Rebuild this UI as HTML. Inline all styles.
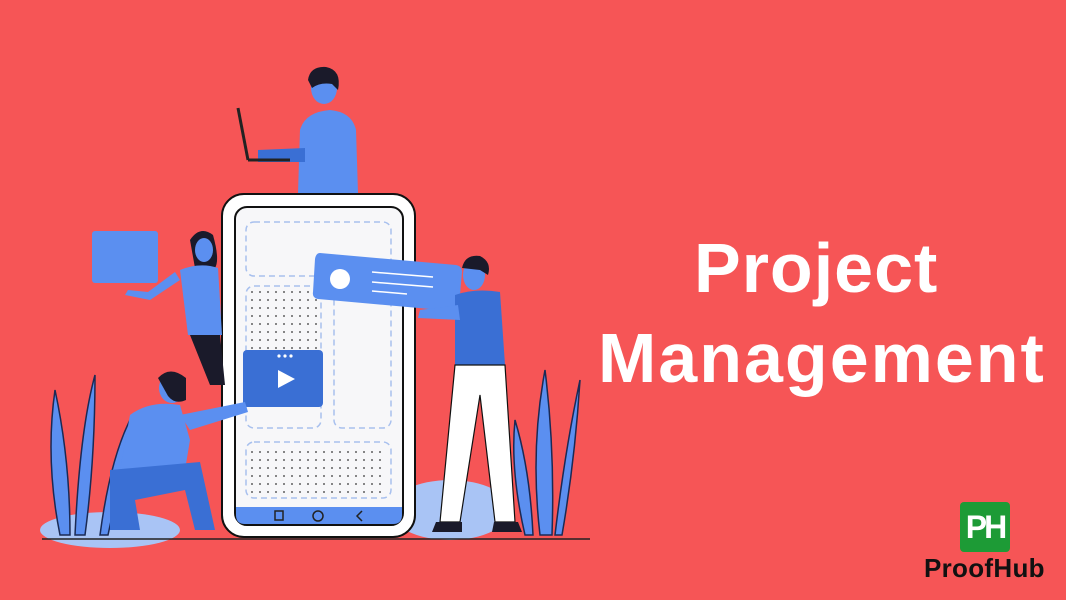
<!DOCTYPE html>
<html><head><meta charset="utf-8"><style>
html,body{margin:0;padding:0}
body{width:1066px;height:600px;background:#f65556;position:relative;overflow:hidden;font-family:"Liberation Sans",sans-serif}
.t{position:absolute;color:#fff;font-weight:bold;font-size:70px;white-space:nowrap;letter-spacing:1px}
</style></head><body>
<div class="t" style="left:694px;top:228px">Project</div>
<div class="t" style="left:598px;top:318px;letter-spacing:2px">Management</div>
<div style="position:absolute;left:960px;top:502px;width:50px;height:50px;background:#1d9b36;border-radius:4px;color:#fff;font-weight:bold;font-size:32px;line-height:50px;text-align:center;letter-spacing:-3px">PH</div>
<div style="position:absolute;left:924px;top:553px;font-weight:bold;font-size:26px;letter-spacing:0.3px;color:#111">ProofHub</div>
<svg width="1066" height="600" style="position:absolute;left:0;top:0">
<ellipse cx="110" cy="530" rx="70" ry="18" fill="#a9c4f5"/>
<ellipse cx="450" cy="510" rx="60" ry="30" fill="#a9c4f5"/>
<line x1="42" y1="539" x2="590" y2="539" stroke="#222" stroke-width="1.5"/>
<g fill="#5b8ff0" stroke="#1a2a55" stroke-width="1.5">
<path d="M60 535 Q45 460 55 390 Q70 460 70 535Z"/>
<path d="M75 535 Q80 430 95 375 Q95 460 85 535Z"/>
<path d="M100 535 Q110 460 130 420 Q120 480 108 535Z"/>
<path d="M540 535 Q530 450 545 370 Q555 450 552 535Z"/>
<path d="M555 535 Q565 450 580 380 Q575 460 562 535Z"/>
<path d="M525 535 Q510 470 515 420 Q530 470 533 535Z"/>
</g>
<rect x="222" y="194" width="193" height="343" rx="22" fill="#fff" stroke="#111" stroke-width="2"/>
<rect x="235" y="207" width="168" height="318" rx="12" fill="#f7f7f9" stroke="#111" stroke-width="2"/>
<path d="M236 507 H402 V515 Q402 524 393 524 H245 Q236 524 236 515Z" fill="#5b8ff0"/>
<rect x="275" y="511" width="8" height="9" fill="none" stroke="#222" stroke-width="1.5"/>
<circle cx="318" cy="516" r="5" fill="none" stroke="#222" stroke-width="1.5"/>
<path d="M362 511 L357 516 L362 521" fill="none" stroke="#222" stroke-width="1.5"/>
<g fill="none" stroke="#a8c0ee" stroke-width="1.5" stroke-dasharray="6 4">
<rect x="246" y="222" width="145" height="54" rx="8"/>
<rect x="246" y="286" width="75" height="142" rx="8"/>
<rect x="334" y="286" width="57" height="142" rx="8"/>
<rect x="246" y="442" width="145" height="56" rx="8"/>
</g>
<defs><pattern id="d" width="8" height="8" patternUnits="userSpaceOnUse"><circle cx="4" cy="4" r="0.9" fill="#333"/></pattern></defs>
<rect x="250" y="290" width="67" height="60" fill="url(#d)"/>
<rect x="250" y="446" width="137" height="48" fill="url(#d)"/>
<rect x="243" y="350" width="80" height="57" rx="4" fill="#3a6fd4"/>
<circle cx="279" cy="356" r="1.6" fill="#fff"/><circle cx="285" cy="356" r="1.6" fill="#fff"/><circle cx="291" cy="356" r="1.6" fill="#fff"/>
<path d="M278 370 L295 379 L278 388Z" fill="#fff"/>
<path d="M320 253 L456 265 Q462 266 462 272 L459 306 Q458 312 452 311 L318 299 Q312 298 313 292 L315 259 Q316 253 320 253Z" fill="#5b8ff0"/>
<circle cx="340" cy="279" r="10" fill="#fff"/>
<g stroke="#fff" stroke-width="1.5"><line x1="372" y1="272" x2="433" y2="277"/><line x1="372" y1="282" x2="433" y2="287"/><line x1="372" y1="291" x2="407" y2="294"/></g>
<path d="M298 193 L300 130 Q305 112 330 110 Q352 112 356 130 L358 193Z" fill="#5b8ff0"/>
<path d="M258 150 L305 148 L305 162 L258 162Z" fill="#3a6fd4"/>
<line x1="238" y1="108" x2="248" y2="160" stroke="#222" stroke-width="3"/>
<line x1="248" y1="160" x2="290" y2="160" stroke="#222" stroke-width="3"/>
<ellipse cx="324" cy="88" rx="13" ry="16" fill="#5b8ff0"/>
<path d="M308 80 Q310 66 326 67 Q342 70 338 90 L332 84 Q320 82 312 88Z" fill="#1a1a2a"/>
<path d="M190 240 Q200 225 213 235 Q220 260 215 268 L195 268Z" fill="#1a1a2a"/>
<ellipse cx="204" cy="250" rx="9" ry="12" fill="#5b8ff0"/>
<path d="M180 270 Q200 262 218 268 L222 335 L188 335Z" fill="#5b8ff0"/>
<path d="M190 335 L220 335 L225 385 L210 385Z" fill="#1a1a2a"/>
<path d="M180 280 L150 300 L125 295 L128 290 L148 292 L175 272Z" fill="#5b8ff0"/>
<rect x="92" y="231" width="66" height="52" rx="3" fill="#5b8ff0"/>
<ellipse cx="172" cy="388" rx="13" ry="15" fill="#5b8ff0"/>
<path d="M158 378 Q170 365 186 378 L186 400 Q175 405 168 396Z" fill="#1a1a2a"/>
<path d="M130 415 Q150 400 180 405 L190 440 L185 470 L120 470Z" fill="#5b8ff0"/>
<path d="M180 415 L245 402 L248 412 L190 430Z" fill="#5b8ff0"/>
<path d="M110 470 L200 462 L215 530 L195 530 L185 490 L135 500 L140 530 L110 530Z" fill="#3a6fd4"/>
<ellipse cx="474" cy="275" rx="11" ry="15" fill="#5b8ff0"/>
<path d="M462 268 Q465 254 480 256 Q492 262 488 275 L480 270Z" fill="#1a1a2a"/>
<path d="M455 295 Q475 288 500 292 L505 365 L455 365Z" fill="#3a6fd4"/>
<path d="M458 305 L420 310 L418 318 L460 320Z" fill="#5b8ff0"/>
<path d="M455 365 L505 365 L515 522 L495 522 L480 395 L460 522 L440 522Z" fill="#fff" stroke="#111" stroke-width="1.2"/>
<path d="M436 522 L462 522 L462 532 L432 532Z M494 522 L518 522 L522 532 L492 532Z" fill="#1a1a2a"/>
</svg>
</body></html>
